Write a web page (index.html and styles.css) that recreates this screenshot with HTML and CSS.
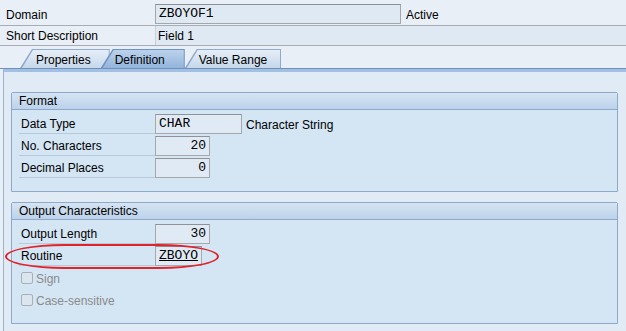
FILE: index.html
```html
<!DOCTYPE html>
<html lang="en">

<head>
  <meta charset="UTF-8">
  <title>Domain - Definition</title>
  <link rel="stylesheet" href="styles.css">
</head>

<body>
  <!-- header fields -->
  <div class="hdr-row row-domain">
    <span class="hdr-label">Domain</span>
    <span class="hdr-input">ZBOYOF1</span>
    <span class="hdr-status">Active</span>
  </div>
  <div class="hdr-row row-desc">
    <span class="hdr-label">Short Description</span>
    <span class="hdr-desc">Field 1</span>
  </div>

  <!-- tab strip -->
  <div class="tabs">
    <div class="tab tab-props"><div class="tab-face">Properties</div></div>
    <div class="tab tab-def active"><div class="tab-face">Definition</div></div>
    <div class="tab tab-range"><div class="tab-face">Value Range</div></div>
  </div>

  <div class="panel">
    <!-- Format -->
    <div class="group group-format">
      <div class="group-title">Format</div>
      <div class="group-body">
        <div class="field">
          <span class="label">Data Type</span>
          <span class="input w-type">CHAR</span>
          <span class="hint">Character String</span>
        </div>
        <div class="field">
          <span class="label">No. Characters</span>
          <span class="input num w-num">20</span>
        </div>
        <div class="field">
          <span class="label">Decimal Places</span>
          <span class="input num w-num">0</span>
        </div>
      </div>
    </div>

    <!-- Output Characteristics -->
    <div class="group group-output">
      <div class="group-title">Output Characteristics</div>
      <div class="group-body">
        <div class="field">
          <span class="label">Output Length</span>
          <span class="input num w-num">30</span>
        </div>
        <div class="field routine-row">
          <span class="label">Routine</span>
          <span class="input w-routine"><u>ZBOYO</u></span>
          <span class="mark"></span>
        </div>
        <div class="field check">
          <span class="box"></span>
          <span>Sign</span>
        </div>
        <div class="field check">
          <span class="box"></span>
          <span>Case-sensitive</span>
        </div>
      </div>
    </div>
  </div>
</body>

</html>
```

FILE: styles.css
```css
/* page */
html,
body {
  margin: 0;
  padding: 0;
}

body {
  background-color: #e9eff6;
  font-family: "Liberation Sans", Arial, sans-serif;
  font-size: 12px;
  color: #000;
  overflow: hidden;
}

/* header rows (Domain / Short Description) */
.hdr-row {
  display: flex;
  align-items: flex-start;
  border-bottom: 1px solid #a9adb2;
}

.row-domain {
  height: 21px;
  padding-top: 4px;
}

.row-desc {
  height: 19px;
}

.hdr-label {
  width: 149px;
  padding-left: 6px;
  padding-top: 1px;
  line-height: 20px;
}

.row-desc .hdr-label {
  line-height: 19px;
}

.hdr-input {
  width: 246px;
  height: 20px;
  box-sizing: border-box;
  border: 1px solid #a4a6a9;
  border-top-color: #8e9093;
  background-color: #dfe9f3;
  padding-left: 3px;
  font-family: "Liberation Mono", monospace;
  font-size: 13px;
  line-height: 18px;
}

.hdr-status {
  margin-left: 5px;
  padding-top: 1px;
  line-height: 20px;
}

.hdr-desc {
  flex: 1;
  height: 19px;
  background-color: #dfe9f3;
  border-left: 1px solid #c6d0da;
  padding-left: 2px;
  line-height: 20px;
}

/* tabs */
.tabs {
  display: flex;
  align-items: flex-end;
  padding: 3px 0 0 20px;
  border-bottom: 1px solid #6d91bf;
}

.tab {
  position: relative;
  height: 19px;
  padding: 1px 1px 0 1px;
  box-sizing: border-box;
  background-color: #90aacb;
  clip-path: polygon(12px 0, 100% 0, 100% 100%, 0 100%);
}

.tab-face {
  height: 18px;
  line-height: 20px;
  background: linear-gradient(#e6eef7, #c6d8eb);
  clip-path: polygon(12px 0, 100% 0, 100% 100%, 1px 100%);
}

.tab-props .tab-face {
  padding: 0 18px 0 15px;
}

.tab-def {
  margin-left: -9px;
}

.tab-def .tab-face {
  padding: 0 19px 0 13px;
}

.tab-range .tab-face {
  padding: 0 13px 0 13px;
}

.tab.active {
  z-index: 1;
  background-color: #6f93c0;
}

.tab.active .tab-face {
  background: linear-gradient(#bcd2ec, #93b4dc);
}

/* content panel */
.panel {
  margin-left: 3px;
  border-top: 3px solid #a3c0e2;
  border-left: 1px solid #9bb2cb;
  background-color: #e1ebf5;
  padding: 20px 8px 10px 7px;
}

/* group boxes */
.group {
  border: 1px solid #8eaacb;
  border-radius: 2px 2px 0 0;
  background-color: #d4e5f4;
}

.group + .group {
  margin-top: 10px;
}

.group-title {
  height: 16px;
  line-height: 17px;
  padding-left: 7px;
  background: linear-gradient(#d6e4f2, #bcd2ea);
  border-bottom: 1px solid #8eaacb;
}

.group-format .group-body {
  padding: 4px 7px 11px;
}

.group-output .group-body {
  padding: 4px 7px 11px;
}

/* field rows */
.field {
  display: flex;
  align-items: center;
  height: 20px;
  margin-bottom: 2px;
}

.label {
  width: 136px;
  height: 20px;
  box-sizing: border-box;
  padding: 2px 0 0 2px;
  border-bottom: 1px solid #b8c9da;
  line-height: 17px;
}

.input {
  height: 20px;
  box-sizing: border-box;
  border: 1px solid #a5a8ac;
  border-top-color: #909396;
  background-color: #e0eaf4;
  padding: 0 3px;
  font-family: "Liberation Mono", monospace;
  font-size: 13px;
  line-height: 18px;
}

.input.num {
  text-align: right;
}

.w-type {
  width: 87px;
}

.w-num {
  width: 55px;
}

.w-routine {
  width: 47px;
}

.hint {
  margin-left: 4px;
  padding-top: 2px;
}

/* checkbox rows (disabled) */
.check {
  gap: 3px;
  color: #8b8b8b;
}

.check span + span {
  padding-top: 2px;
}

.box {
  width: 12px;
  height: 12px;
  box-sizing: border-box;
  margin-left: 2px;
  border: 1px solid #a9afb6;
  border-radius: 2px;
  background-color: #dae5f0;
}

/* red marker drawn round the Routine row */
.routine-row {
  position: relative;
}

.mark {
  position: absolute;
  left: -14px;
  top: -2px;
  width: 214px;
  height: 25px;
  box-sizing: border-box;
  border: 2px solid #e1232b;
  border-radius: 60px / 50%;
}
```
